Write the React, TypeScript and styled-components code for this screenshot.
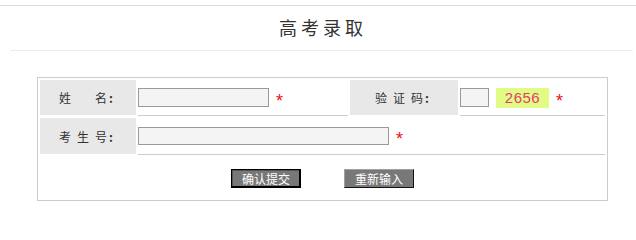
import React from "react";
import styled, { createGlobalStyle } from "styled-components";

const GlobalStyle = createGlobalStyle`
  html, body { margin: 0; padding: 0; background: #fff; }
  body {
    font-family: "Noto Sans CJK SC", "Noto Sans", "DejaVu Sans", sans-serif;
    color: #333;
  }
  * { box-sizing: border-box; }
`;

const Page = styled.div`
  width: 636px;
  padding-top: 5px;
`;

const Header = styled.div`
  border-top: 1px solid #dcdcdc;
`;

const Title = styled.h1`
  margin: 0;
  height: 44px;
  display: flex;
  align-items: center;
  justify-content: center;
  font-size: 18px;
  font-weight: normal;
  letter-spacing: 4px;
  padding-left: 10px;
  padding-bottom: 3px;
  color: #333;
`;

const Rule = styled.div`
  margin: 0 3px 0 10px;
  border-top: 1px solid #ececec;
`;

const Form = styled.form`
  margin: 26px 0 0 37px;
  width: 571px;
  border: 1px solid #cccccc;
  padding: 2px;
  display: grid;
  grid-template-columns: 96px 210px 108px 145px;
  grid-template-rows: 36px 37px 41px;
  gap: 2px;
`;

const LabelCell = styled.div`
  background: #e8e8e8;
  background-clip: padding-box;
  border-bottom: 1px solid transparent;
  display: flex;
  align-items: center;
  justify-content: center;
  font-size: 12px;
  color: #333;
  padding-right: 4px;
`;

const Spaced = styled.span`
  letter-spacing: 6px;
`;

const Colon = styled.span`
  font-weight: bold;
  margin-left: 2px;
`;

const FieldCell = styled.div<{ $span?: number }>`
  border-bottom: 1px solid #cccccc;
  display: flex;
  align-items: center;
  grid-column: span ${(p) => p.$span ?? 1};
`;

const TextInput = styled.input<{ $w: number; $h: number }>`
  width: ${(p) => p.$w}px;
  height: ${(p) => p.$h}px;
  margin: 0;
  padding: 0 2px;
  border: 1px solid #9a9a9a;
  background: #f4f4f4;
  font-size: 12px;
  outline: none;
`;

const Star = styled.span`
  color: #e11;
  font-family: "Liberation Sans", Arial, sans-serif;
  font-size: 18px;
  line-height: 18px;
  height: 18px;
  padding-top: 3px;
  margin-left: 7px;
`;

const Captcha = styled.span`
  margin-left: 7px;
  width: 53px;
  height: 20px;
  background: #e2fb84;
  color: #e43c72;
  font-family: "Liberation Sans", Arial, sans-serif;
  font-size: 15px;
  line-height: 20px;
  text-align: center;
  letter-spacing: 0.5px;
`;

const ButtonRow = styled.div`
  grid-column: 1 / -1;
  display: flex;
  align-items: center;
  justify-content: center;
  gap: 43px;
  padding-top: 1px;
`;

const Btn = styled.button<{ $focused?: boolean }>`
  width: 70px;
  height: 19px;
  margin: 0;
  padding: 0;
  background: #787878;
  color: #fff;
  font-family: "Noto Sans CJK SC", sans-serif;
  font-size: 12px;
  line-height: 17px;
  cursor: pointer;
  border: 1px solid;
  border-color: ${(p) => (p.$focused ? "#000" : "#a0a0a0 #111 #111 #a0a0a0")};
  box-shadow: ${(p) =>
    p.$focused ? "inset -1px -1px 0 #000, inset 1px 1px 0 #555" : "none"};
`;

function Label({ text }: { text: string }) {
  return (
    <LabelCell>
      <Spaced>{text.slice(0, -1)}</Spaced>
      {text.slice(-1)}
      <Colon>:</Colon>
    </LabelCell>
  );
}

export default function App() {
  return (
    <>
      <GlobalStyle />
      <Page>
        <Header>
          <Title>高考录取</Title>
          <Rule />
        </Header>
        <Form onSubmit={(e) => e.preventDefault()}>
          <Label text={"姓\u3000名"} />
          <FieldCell>
            <TextInput $w={131} $h={19} />
            <Star>*</Star>
          </FieldCell>
          <Label text="验证码" />
          <FieldCell>
            <TextInput $w={29} $h={19} />
            <Captcha>2656</Captcha>
            <Star>*</Star>
          </FieldCell>
          <Label text="考生号" />
          <FieldCell $span={3}>
            <TextInput $w={251} $h={18} />
            <Star>*</Star>
          </FieldCell>
          <ButtonRow>
            <Btn type="submit" $focused>
              确认提交
            </Btn>
            <Btn type="reset">重新输入</Btn>
          </ButtonRow>
        </Form>
      </Page>
    </>
  );
}
